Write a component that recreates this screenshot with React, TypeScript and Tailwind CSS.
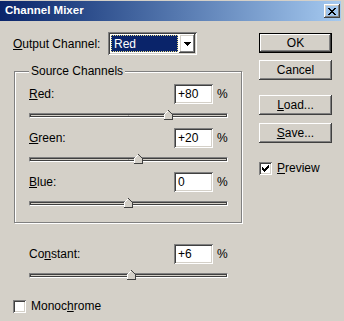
import React from "react";

const SUNKEN =
  "shadow-[inset_1px_1px_0_#808080,inset_-1px_-1px_0_#ffffff,inset_2px_2px_0_#404040,inset_-2px_-2px_0_#d4d0c8]";
const RAISED =
  "shadow-[inset_-1px_-1px_0_#404040,inset_1px_1px_0_#ffffff,inset_-2px_-2px_0_#808080,inset_2px_2px_0_#d4d0c8]";

function Slider({ value }: { value: number }) {
  const width = 199;
  const left = Math.round(((value + 200) / 400) * width - 4.5);
  return (
    <div className="relative h-[5px] w-[199px]">
      <div className="h-[5px] w-full border-t border-l border-t-[#808080] border-l-[#808080] border-b border-r border-b-white border-r-white">
        <div className="h-[3px] w-full border border-[#404040] bg-[#d4d0c8] flex justify-center">
          <div className="w-px h-full bg-[#a8a8a8]" />
        </div>
      </div>
      <svg
        className="absolute top-[-3px]"
        style={{ left }}
        width="9"
        height="10"
        viewBox="0 0 9 10"
        shapeRendering="crispEdges"
      >
        <polygon points="0,9.5 0,4.5 4.5,0 9,4.5 9,9.5" fill="#d4d0c8" />
        <polyline points="0.5,9 0.5,4.5 4.5,0.5" fill="none" stroke="#ffffff" strokeWidth="1" />
        <polyline points="4.5,0.5 8.5,4.5 8.5,9.5 0,9.5" fill="none" stroke="#404040" strokeWidth="1" />
      </svg>
    </div>
  );
}

function NumBox({ value }: { value: string }) {
  return (
    <div className={`w-[39px] h-[20px] bg-white ${SUNKEN} flex items-center pl-[4px] text-[12px] leading-none`}>
      {value}
    </div>
  );
}

function Row({ label, value }: { label: React.ReactNode; value: string }) {
  return (
    <div className="flex items-center h-[20px] w-[199px]">
      <span className="flex-1">{label}</span>
      <NumBox value={value} />
      <span className="ml-[4px] w-[11px]">%</span>
    </div>
  );
}

function Button({ children, def }: { children: React.ReactNode; def?: boolean }) {
  if (def) {
    return (
      <div className="w-[73px] h-[20px] border border-black">
        <div className={`w-full h-full ${RAISED} flex items-center justify-center`}>{children}</div>
      </div>
    );
  }
  return (
    <div className={`w-[73px] h-[20px] ${RAISED} flex items-center justify-center`}>{children}</div>
  );
}

function CheckBox({ checked }: { checked?: boolean }) {
  return (
    <div className={`w-[13px] h-[13px] bg-white ${SUNKEN} relative shrink-0`}>
      {checked && (
        <svg className="absolute left-0 top-0" width="13" height="13" viewBox="0 0 13 13" shapeRendering="crispEdges">
          <rect x="9" y="3" width="1" height="1" fill="#000" />
          <rect x="8" y="4" width="2" height="1" fill="#000" />
          <rect x="3" y="5" width="1" height="1" fill="#000" />
          <rect x="7" y="5" width="3" height="1" fill="#000" />
          <rect x="3" y="6" width="2" height="1" fill="#000" />
          <rect x="6" y="6" width="3" height="1" fill="#000" />
          <rect x="3" y="7" width="5" height="1" fill="#000" />
          <rect x="4" y="8" width="3" height="1" fill="#000" />
          <rect x="5" y="9" width="1" height="1" fill="#000" />
        </svg>
      )}
    </div>
  );
}

export default function App() {
  return (
    <div
      className="w-[344px] h-[321px] bg-[#d4d0c8] pt-[1px] pr-[3px] text-black text-[12px] overflow-hidden"
      style={{ fontFamily: '"Liberation Sans", Arial, sans-serif' }}
    >
      {/* Title bar */}
      <div className="h-[20px] bg-linear-to-r from-[#0a246a] to-[#a6caf0] flex items-center pl-[5px] pr-[1px]">
        <span className="flex-1 text-white font-bold text-[11.5px] leading-none">Channel Mixer</span>
        <div className={`w-[16px] h-[14px] ${RAISED} flex items-center justify-center`}>
          <svg width="8" height="7" viewBox="0 0 8 7" shapeRendering="crispEdges">
            <rect x="0" y="0" width="2" height="1" fill="#000" />
            <rect x="6" y="0" width="2" height="1" fill="#000" />
            <rect x="1" y="1" width="2" height="1" fill="#000" />
            <rect x="5" y="1" width="2" height="1" fill="#000" />
            <rect x="2" y="2" width="4" height="1" fill="#000" />
            <rect x="3" y="3" width="2" height="1" fill="#000" />
            <rect x="2" y="4" width="4" height="1" fill="#000" />
            <rect x="1" y="5" width="2" height="1" fill="#000" />
            <rect x="5" y="5" width="2" height="1" fill="#000" />
            <rect x="0" y="6" width="2" height="1" fill="#000" />
            <rect x="6" y="6" width="2" height="1" fill="#000" />
          </svg>
        </div>
      </div>

      {/* Body */}
      <div className="flex">
        {/* Left column */}
        <div className="w-[259px] flex flex-col">
          <div className="mt-[11px] ml-[13px] flex items-center h-[23px]">
            <span className="w-[95px]">
              <u>O</u>utput Channel:
            </span>
            <div className={`w-[89px] h-[23px] bg-white ${SUNKEN} p-[2px] flex`}>
              <div className="flex-1 m-[1px] bg-[#0a246a] border border-dotted border-[#e8dc8a] flex items-center pl-[2px] text-white">
                Red
              </div>
              <div className={`w-[16px] h-[19px] ${RAISED} flex items-center justify-center`}>
                <svg width="7" height="4" viewBox="0 0 7 4" shapeRendering="crispEdges">
                  <rect x="0" y="0" width="7" height="1" fill="#000" />
                  <rect x="1" y="1" width="5" height="1" fill="#000" />
                  <rect x="2" y="2" width="3" height="1" fill="#000" />
                  <rect x="3" y="3" width="1" height="1" fill="#000" />
                </svg>
              </div>
            </div>
          </div>

          {/* Source Channels group */}
          <div className="relative mt-[16px] ml-[14px] w-[228px] h-[152px] border border-[#808080] shadow-[inset_1px_1px_0_#ffffff,1px_1px_0_#ffffff] pl-[14px] pr-[13px] pt-[12px] flex flex-col">
            <span className="absolute top-[-8px] left-[14px] px-[2px] bg-[#d4d0c8] leading-[14px]">
              Source Channels
            </span>
            <Row label={<><u>R</u>ed:</>} value="+80" />
            <div className="mt-[9px]">
              <Slider value={80} />
            </div>
            <div className="mt-[10px]">
              <Row label={<><u>G</u>reen:</>} value="+20" />
            </div>
            <div className="mt-[9px]">
              <Slider value={20} />
            </div>
            <div className="mt-[10px]">
              <Row label={<><u>B</u>lue:</>} value="0" />
            </div>
            <div className="mt-[9px]">
              <Slider value={0} />
            </div>
          </div>

          {/* Constant */}
          <div className="mt-[21px] ml-[29px]">
            <Row label={<>Co<u>n</u>stant:</>} value="+6" />
          </div>
          <div className="mt-[9px] ml-[29px]">
            <Slider value={6} />
          </div>

          <div className="mt-[19px] ml-[13px] flex items-center gap-[5px]">
            <CheckBox />
            <span>
              Monoc<u>h</u>rome
            </span>
          </div>
        </div>

        {/* Right column */}
        <div className="flex flex-col">
          <div className="mt-[12px]">
            <Button def>OK</Button>
          </div>
          <div className="mt-[7px]">
            <Button>Cancel</Button>
          </div>
          <div className="mt-[15px]">
            <Button>
              <span>
                <u>L</u>oad...
              </span>
            </Button>
          </div>
          <div className="mt-[8px]">
            <Button>
              <span>
                <u>S</u>ave...
              </span>
            </Button>
          </div>
          <div className="mt-[16px] flex items-center gap-[5px]">
            <CheckBox checked />
            <span>
              <u>P</u>review
            </span>
          </div>
        </div>
      </div>
    </div>
  );
}
